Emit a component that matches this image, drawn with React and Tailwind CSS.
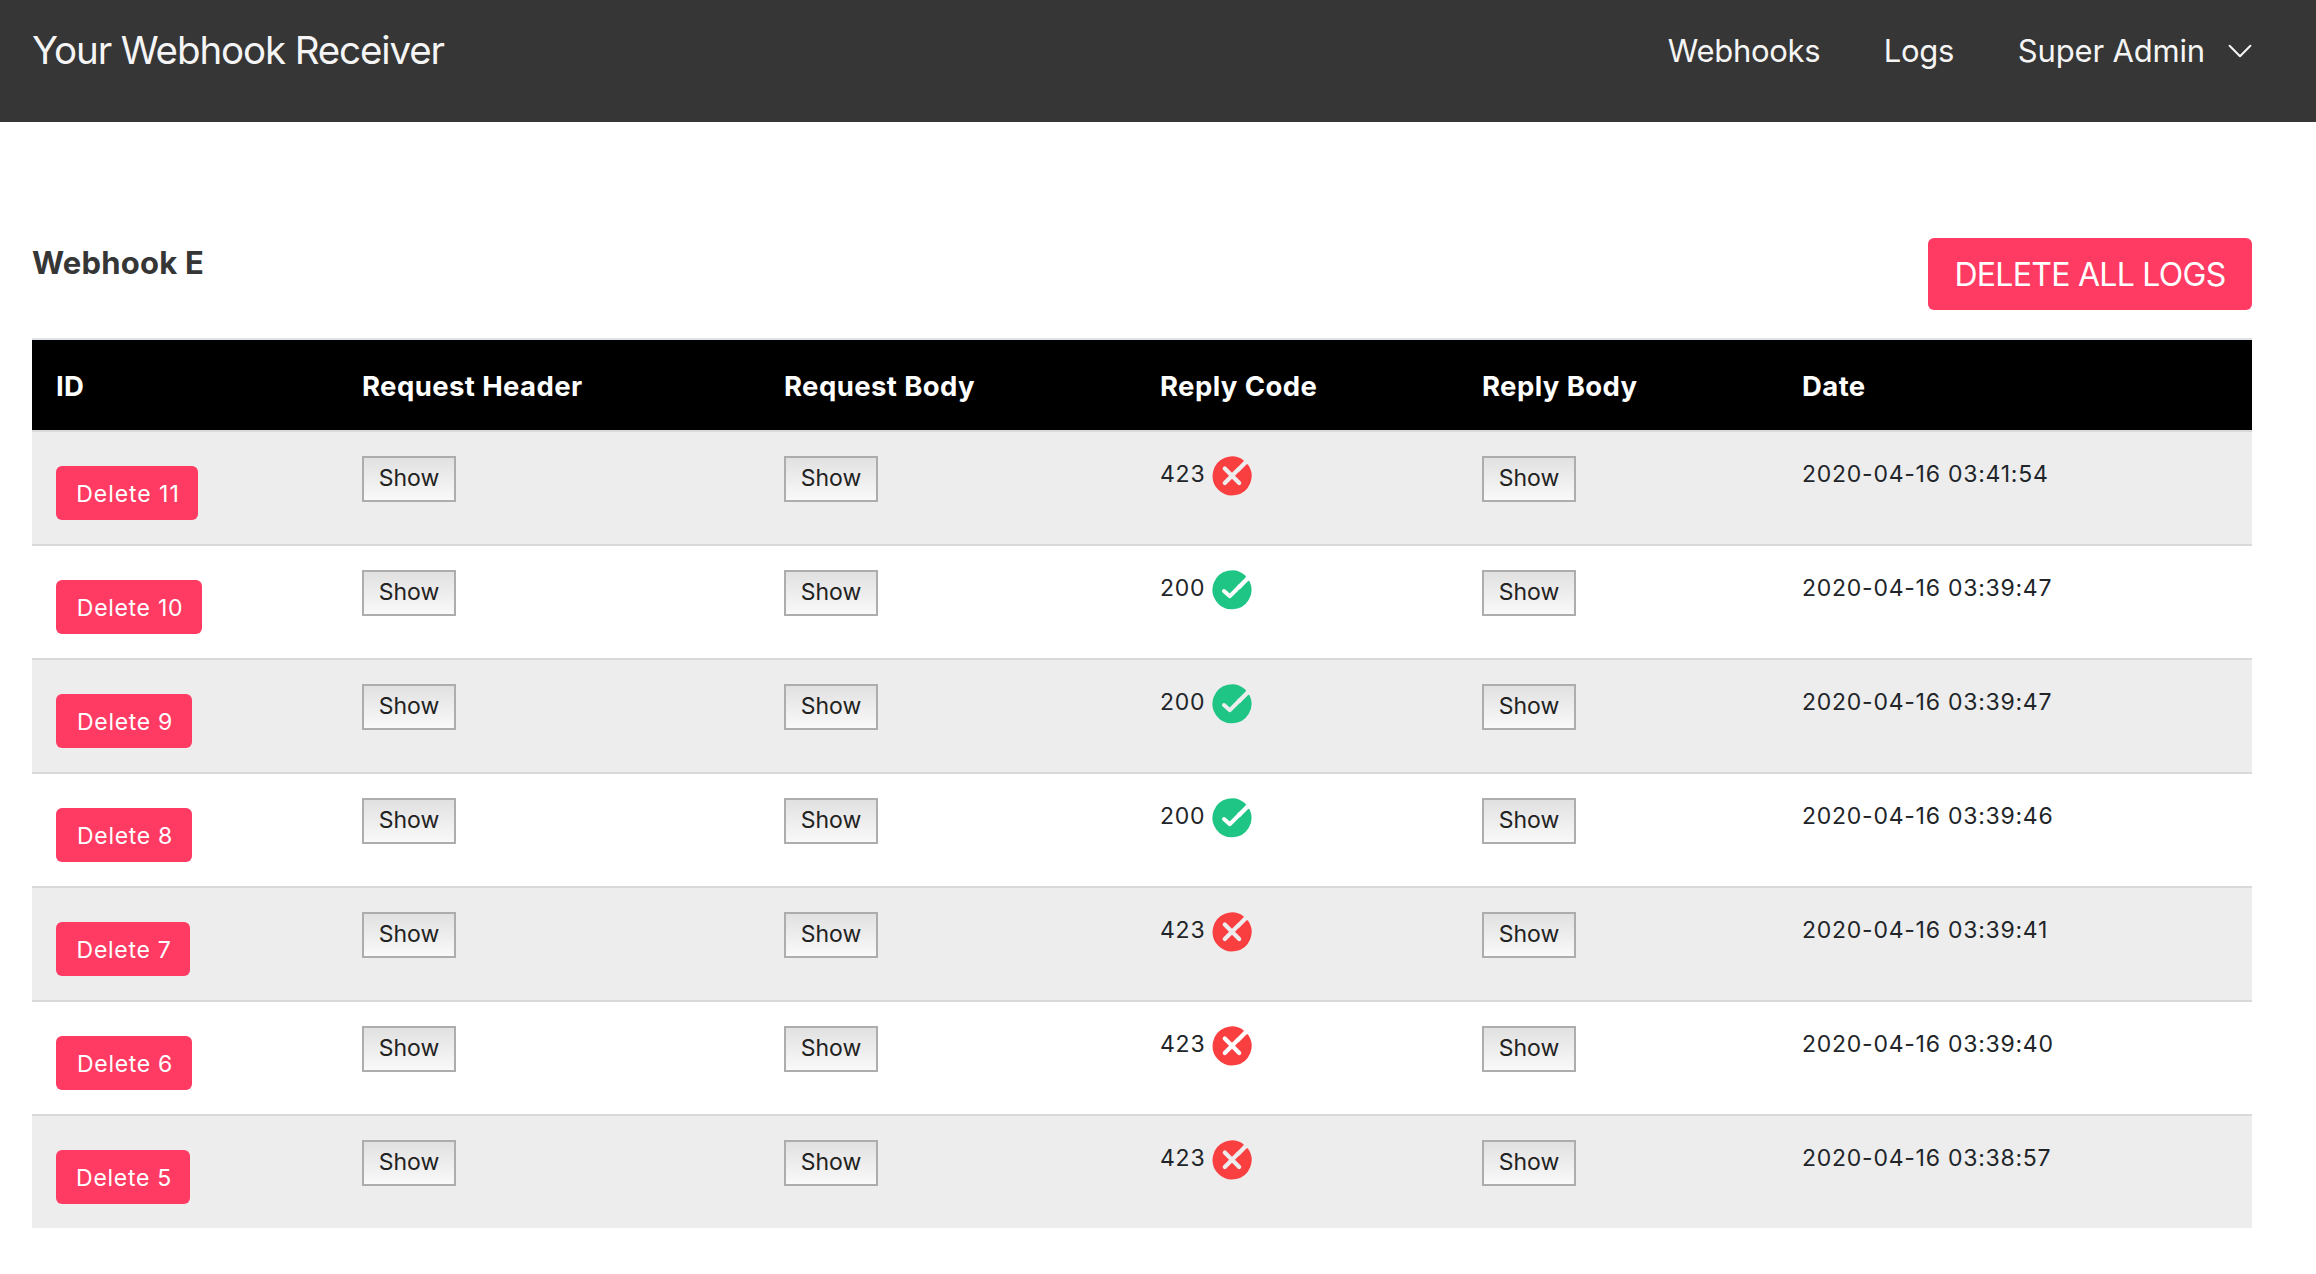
import React from "react";

const LOGS = [
  { id: 11, width: "w-[142px] tracking-[0.95px]", code: 423, date: "2020-04-16 03:41:54" },
  { id: 10, width: "w-[146px] tracking-[0.7px]", code: 200, date: "2020-04-16 03:39:47" },
  { id: 9, width: "w-[136px] tracking-[0.7px]", code: 200, date: "2020-04-16 03:39:47" },
  { id: 8, width: "w-[136px] tracking-[0.7px]", code: 200, date: "2020-04-16 03:39:46" },
  { id: 7, width: "w-[134px] tracking-[0.7px]", code: 423, date: "2020-04-16 03:39:41" },
  { id: 6, width: "w-[136px] tracking-[0.7px]", code: 423, date: "2020-04-16 03:39:40" },
  { id: 5, width: "w-[134px] tracking-[0.7px]", code: 423, date: "2020-04-16 03:38:57" },
];

const COLUMNS = [
  { title: "ID", width: "w-[306px]" },
  { title: "Request Header", width: "w-[422px]" },
  { title: "Request Body", width: "w-[376px]" },
  { title: "Reply Code", width: "w-[322px]" },
  { title: "Reply Body", width: "w-[320px]" },
  { title: "Date", width: "w-[474px]" },
];

function ChevronDown() {
  return (
    <svg className="ml-[23px] h-3.5 w-6" viewBox="0 0 24 14" fill="none" stroke="currentColor" strokeWidth="2" strokeLinecap="round" strokeLinejoin="round">
      <path d="M1.6 1.8 12 12.2 22.4 1.8" />
    </svg>
  );
}

function SuccessIcon({ id }) {
  return (
    <svg className="h-10 w-10" viewBox="0 0 40 40">
      <mask id={id} maskUnits="userSpaceOnUse" x="0" y="0" width="40" height="40">
        <rect width="40" height="40" fill="#fff" />
        <path d="M12 21.1 17.9 26.2 28 16" fill="none" stroke="#000" strokeWidth="4" strokeLinecap="round" strokeLinejoin="round" />
      </mask>
      <path mask={`url(#${id})`} d="M32.8 6.6 23.3 16.1 27.96 20.7 36.65 12A18.4 18.4 0 1 1 32.8 6.6Z" fill="#1fc585" stroke="#1fc585" strokeWidth="2.2" strokeLinejoin="round" />
    </svg>
  );
}

function ErrorIcon({ id }) {
  return (
    <svg className="h-10 w-10" viewBox="0 0 40 40">
      <mask id={id} maskUnits="userSpaceOnUse" x="0" y="0" width="40" height="40">
        <rect width="40" height="40" fill="#fff" />
        <path d="M12.8 12.6 27.2 27M12.8 27 26 13.8" fill="none" stroke="#000" strokeWidth="4.2" strokeLinecap="round" />
      </mask>
      <path mask={`url(#${id})`} d="M30.6 4.8 22.75 12.65 27.35 17.25 35.2 9.4A18.4 18.4 0 1 1 30.6 4.8Z" fill="#f93f40" stroke="#f93f40" strokeWidth="2.2" strokeLinejoin="round" />
    </svg>
  );
}

function ShowButton() {
  return (
    <button className="block h-[46px] w-[94px] border-2 border-[#adadad] bg-linear-to-b from-[#e1e1e1] to-[#f9f9f9] pb-px text-center text-[23px] leading-[41px] text-[#222]">
      Show
    </button>
  );
}

function LogRow({ log, striped }) {
  const cell = "h-[114px] border-t-2 border-[#d9d9d9] pt-6 pl-6 align-top";
  return (
    <tr className={striped ? "bg-[#ededed]" : "bg-white"}>
      <td className={cell}>
        <button className={`mt-2.5 block h-[54px] rounded-[6px] bg-[#ff3b63] pt-0.5 pl-0.5 text-center text-[23px] leading-[52px] whitespace-nowrap text-white ${log.width}`}>
          Delete {log.id}
        </button>
      </td>
      <td className={cell}><ShowButton /></td>
      <td className={cell}><ShowButton /></td>
      <td className={cell}>
        <div className="flex items-start">
          <span className="w-[52px] text-[23px] leading-9 tracking-[0.75px]">{log.code}</span>
          {log.code === 200 ? <SuccessIcon id={`cut-${log.id}`} /> : <ErrorIcon id={`cut-${log.id}`} />}
        </div>
      </td>
      <td className={cell}><ShowButton /></td>
      <td className={`${cell} text-[23px] leading-9 tracking-[0.75px]`}>{log.date}</td>
    </tr>
  );
}

export default function App() {
  return (
    <div className="min-h-[1274px] w-[2316px] bg-white font-['Inter',sans-serif] text-[#212529]">
      <header className="flex h-[122px] items-start justify-between bg-[#363636] pr-16 pl-8 text-[#f5f5f5]">
        <div className="pt-6 text-[38.5px] leading-[52px] tracking-[-1.12px]">Your Webhook Receiver</div>
        <nav className="flex pt-[31px] text-[31px] leading-10 tracking-[-0.3px]">
          <a className="w-[216px]">Webhooks</a>
          <a className="w-[134px]">Logs</a>
          <a className="flex items-center tracking-[-0.17px]">
            Super Admin
            <ChevronDown />
          </a>
        </nav>
      </header>

      <main className="pr-16 pl-8">
        <div className="flex h-[216px] items-start justify-between">
          <h1 className="pt-[121px] text-[31px] leading-10 font-bold tracking-[0.2px] text-[#363636]">Webhook E</h1>
          <button className="mt-[116px] h-[72px] w-[324px] rounded-[6px] bg-[#ff3b63] pt-0.5 text-center text-[32px] leading-[70px] tracking-[-0.72px] text-white">
            DELETE ALL LOGS
          </button>
        </div>

        <table className="w-[2220px] table-fixed border-separate border-spacing-0 text-left">
          <thead>
            <tr className="bg-black text-white">
              {COLUMNS.map((column) => (
                <th key={column.title} className={`h-[92px] border-t-2 border-[#dee2e6] pt-0.5 pl-6 align-middle text-[27.5px] leading-10 font-[650] tracking-[0.4px] ${column.width}`}>
                  {column.title}
                </th>
              ))}
            </tr>
          </thead>
          <tbody>
            {LOGS.map((log, index) => (
              <LogRow key={log.id} log={log} striped={index % 2 === 0} />
            ))}
          </tbody>
        </table>
      </main>
    </div>
  );
}
